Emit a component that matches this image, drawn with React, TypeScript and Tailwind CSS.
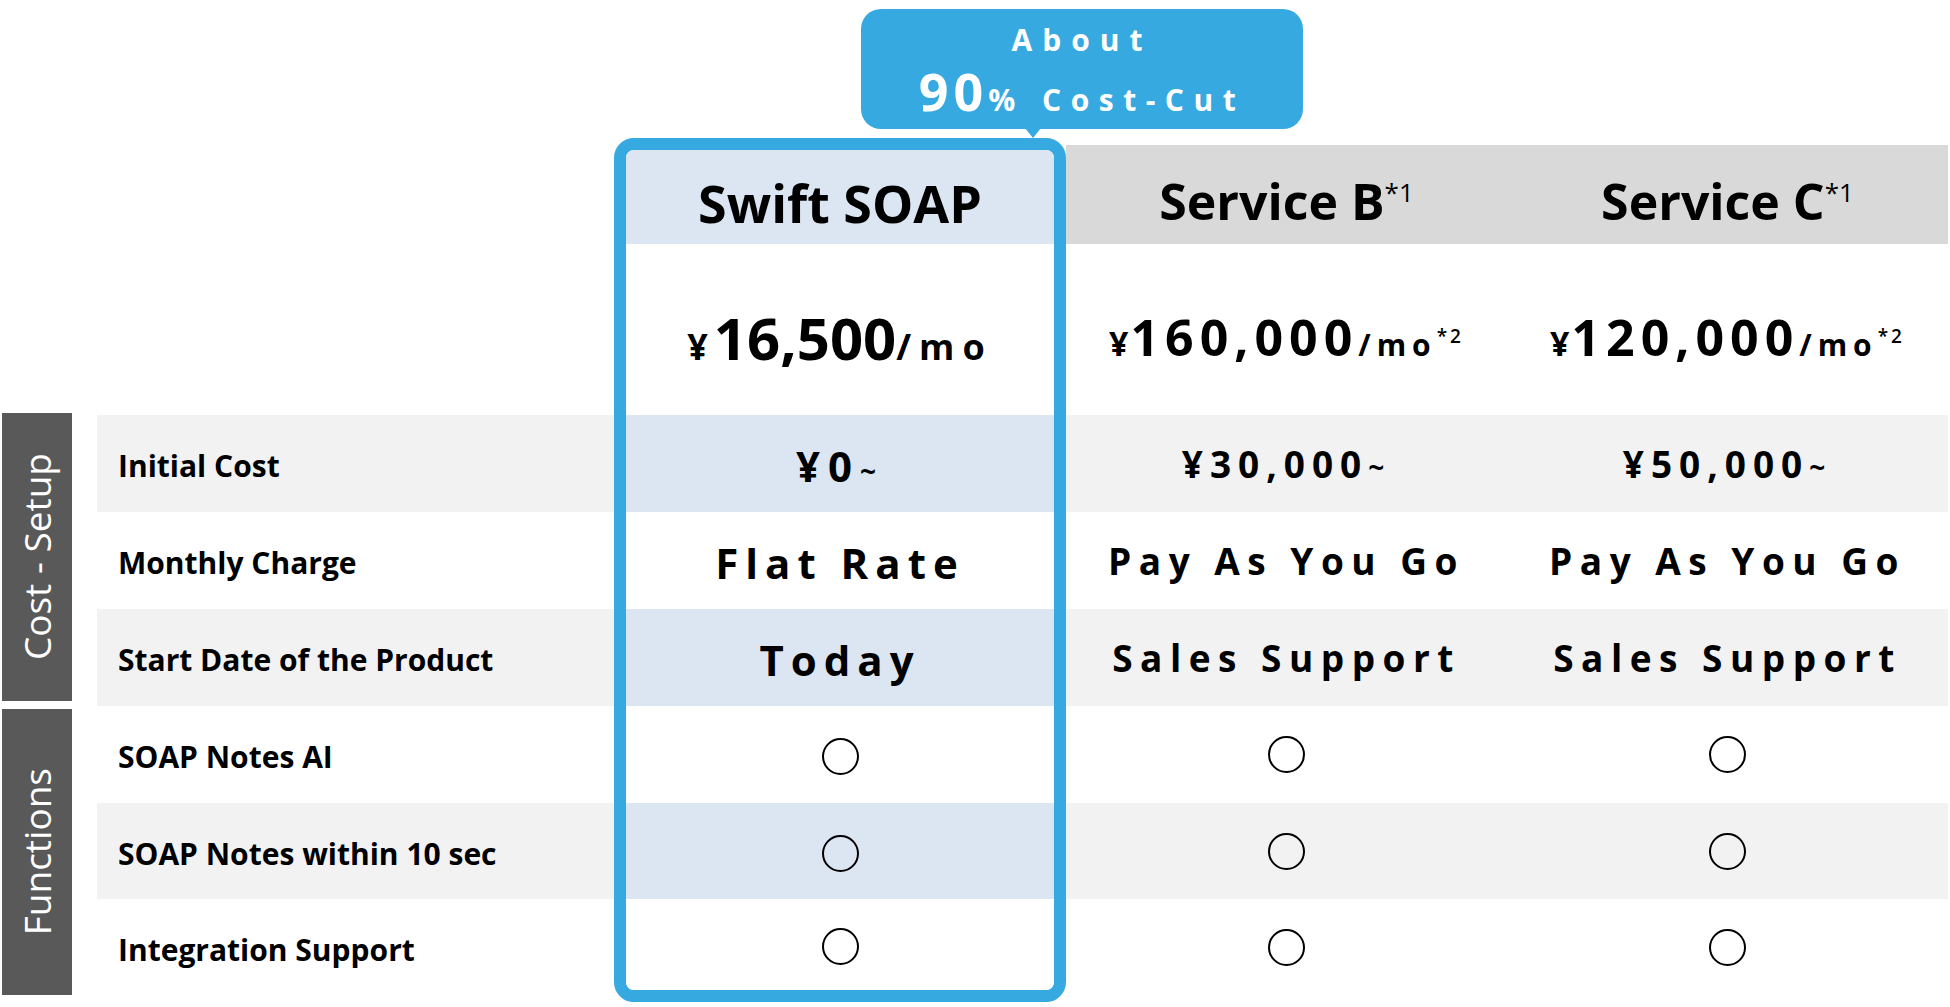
import React from "react";

type Row = {
  label: string;
  swift: React.ReactNode;
  b: React.ReactNode;
  c: React.ReactNode;
  shaded: boolean;
  h: string;
  swiftH: string;
};

function Circle() {
  return <div className="w-[37px] h-[37px] rounded-full border-2 border-black" />;
}

function Yen({ amount, big }: { amount: string; big?: boolean }) {
  return (
    <span className={big ? "text-[42px] font-bold tracking-[8px]" : "text-[37px] font-bold tracking-[7px]"}>
      ¥{amount}
      <span className="text-[28px]">~</span>
    </span>
  );
}

const rows: Row[] = [
  {
    label: "Initial Cost",
    swift: <Yen amount="0" big />,
    b: <Yen amount="30,000" />,
    c: <Yen amount="50,000" />,
    shaded: true,
    h: "h-[97px]",
    swiftH: "h-[97px]",
  },
  {
    label: "Monthly Charge",
    swift: <span className="text-[42px] font-bold tracking-[7px]">Flat Rate</span>,
    b: <span className="text-[37px] font-bold tracking-[7.5px]">Pay As You Go</span>,
    c: <span className="text-[37px] font-bold tracking-[7.5px]">Pay As You Go</span>,
    shaded: false,
    h: "h-[97px]",
    swiftH: "h-[97px]",
  },
  {
    label: "Start Date of the Product",
    swift: <span className="text-[42px] font-bold tracking-[7px]">Today</span>,
    b: <span className="text-[37px] font-bold tracking-[7.5px]">Sales Support</span>,
    c: <span className="text-[37px] font-bold tracking-[7.5px]">Sales Support</span>,
    shaded: true,
    h: "h-[97px]",
    swiftH: "h-[97px]",
  },
  {
    label: "SOAP Notes AI",
    swift: <Circle />,
    b: <Circle />,
    c: <Circle />,
    shaded: false,
    h: "h-[97px]",
    swiftH: "h-[97px]",
  },
  {
    label: "SOAP Notes within 10 sec",
    swift: <Circle />,
    b: <Circle />,
    c: <Circle />,
    shaded: true,
    h: "h-[96px]",
    swiftH: "h-[96px]",
  },
  {
    label: "Integration Support",
    swift: <Circle />,
    b: <Circle />,
    c: <Circle />,
    shaded: false,
    h: "h-[97px]",
    swiftH: "h-[91px]",
  },
];

function Price({ amount }: { amount: string }) {
  return (
    <div className="flex items-baseline pt-4 text-black">
      <span className="text-[34px] font-bold mr-[2px]">¥</span>
      <span className="text-[50px] font-bold tracking-[6px]">{amount}</span>
      <span className="text-[30px] font-bold tracking-[6px]">/mo</span>
      <span className="relative -top-[13px] text-[19px] font-semibold tracking-[3px]">*2</span>
    </div>
  );
}

function ServiceColumn({ name, price, pick }: { name: string; price: string; pick: "b" | "c" }) {
  return (
    <div className="w-[441px] mt-[7px] flex flex-col">
      <div className="h-[99px] bg-[#d9d9d9] flex items-center justify-center pt-[12px]">
        <span className="text-[50px] font-bold text-black leading-none">
          {name}
          <span className="relative -top-[18px] text-[26px] font-normal">*1</span>
        </span>
      </div>
      <div className="h-[171px] bg-white flex items-center justify-center">
        <Price amount={price} />
      </div>
      {rows.map((r) => (
        <div
          key={r.label}
          className={`${r.h} flex items-center justify-center text-black ${r.shaded ? "bg-[#f2f2f2]" : "bg-white"}`}
        >
          {r[pick]}
        </div>
      ))}
    </div>
  );
}

export default function App() {
  return (
    <div className="w-[1950px] h-[1007px] bg-white overflow-hidden font-['Open_Sans',sans-serif] text-black">
      <div className="h-[138px] flex">
        <div className="relative ml-[861px] mt-[9px] w-[442px] h-[120px] rounded-[20px] bg-[#36a9e1] flex flex-col items-center text-white font-bold">
          <div className="text-[30px] tracking-[10px] leading-none mt-[16px]">About</div>
          <div className="leading-none mt-[10px] flex items-baseline">
            <span className="text-[52px] tracking-[5px]">90</span>
            <span className="text-[30px] tracking-[9.5px]">% Cost-Cut</span>
          </div>
          <div className="absolute bottom-[-9px] left-[164px] w-0 h-0 border-l-[8px] border-r-[8px] border-t-[10px] border-l-transparent border-r-transparent border-t-[#36a9e1]" />
        </div>
      </div>

      <div className="flex items-start pl-[2px]">
        <div className="w-[70px] mt-[275px] flex flex-col gap-[8px]">
          <div className="h-[288px] bg-[#595959] flex items-center justify-center">
            <span className="[writing-mode:vertical-rl] rotate-180 text-white text-[37px] whitespace-nowrap">
              Cost - Setup
            </span>
          </div>
          <div className="h-[286px] bg-[#595959] flex items-center justify-center">
            <span className="[writing-mode:vertical-rl] rotate-180 text-white text-[37px] whitespace-nowrap">
              Functions
            </span>
          </div>
        </div>

        <div className="ml-[25px] w-[517px] mt-[7px] flex flex-col">
          <div className="h-[99px]" />
          <div className="h-[171px]" />
          {rows.map((r) => (
            <div
              key={r.label}
              className={`${r.h} flex items-center pl-[21px] pt-[4px] text-[30px] font-bold ${r.shaded ? "bg-[#f2f2f2]" : "bg-white"}`}
            >
              {r.label}
            </div>
          ))}
        </div>

        <div className="w-[452px] border-[12px] border-[#36a9e1] rounded-[20px] overflow-hidden flex flex-col">
          <div className="h-[94px] bg-[#dce6f2] flex items-center justify-center pt-[12px]">
            <span className="text-[52px] font-bold leading-none">Swift SOAP</span>
          </div>
          <div className="h-[171px] bg-white flex items-center justify-center">
            <div className="flex items-baseline pt-4">
              <span className="text-[36px] font-bold mr-[6px]">¥</span>
              <span className="text-[58px] font-bold">16,500</span>
              <span className="text-[36px] font-bold tracking-[8px]">/mo</span>
            </div>
          </div>
          {rows.map((r) => (
            <div
              key={r.label}
              className={`${r.swiftH} flex items-center justify-center pt-[4px] ${r.shaded ? "bg-[#dce6f2]" : "bg-white"}`}
            >
              {r.swift}
            </div>
          ))}
        </div>

        <ServiceColumn name="Service B" price="160,000" pick="b" />
        <ServiceColumn name="Service C" price="120,000" pick="c" />
      </div>
    </div>
  );
}
